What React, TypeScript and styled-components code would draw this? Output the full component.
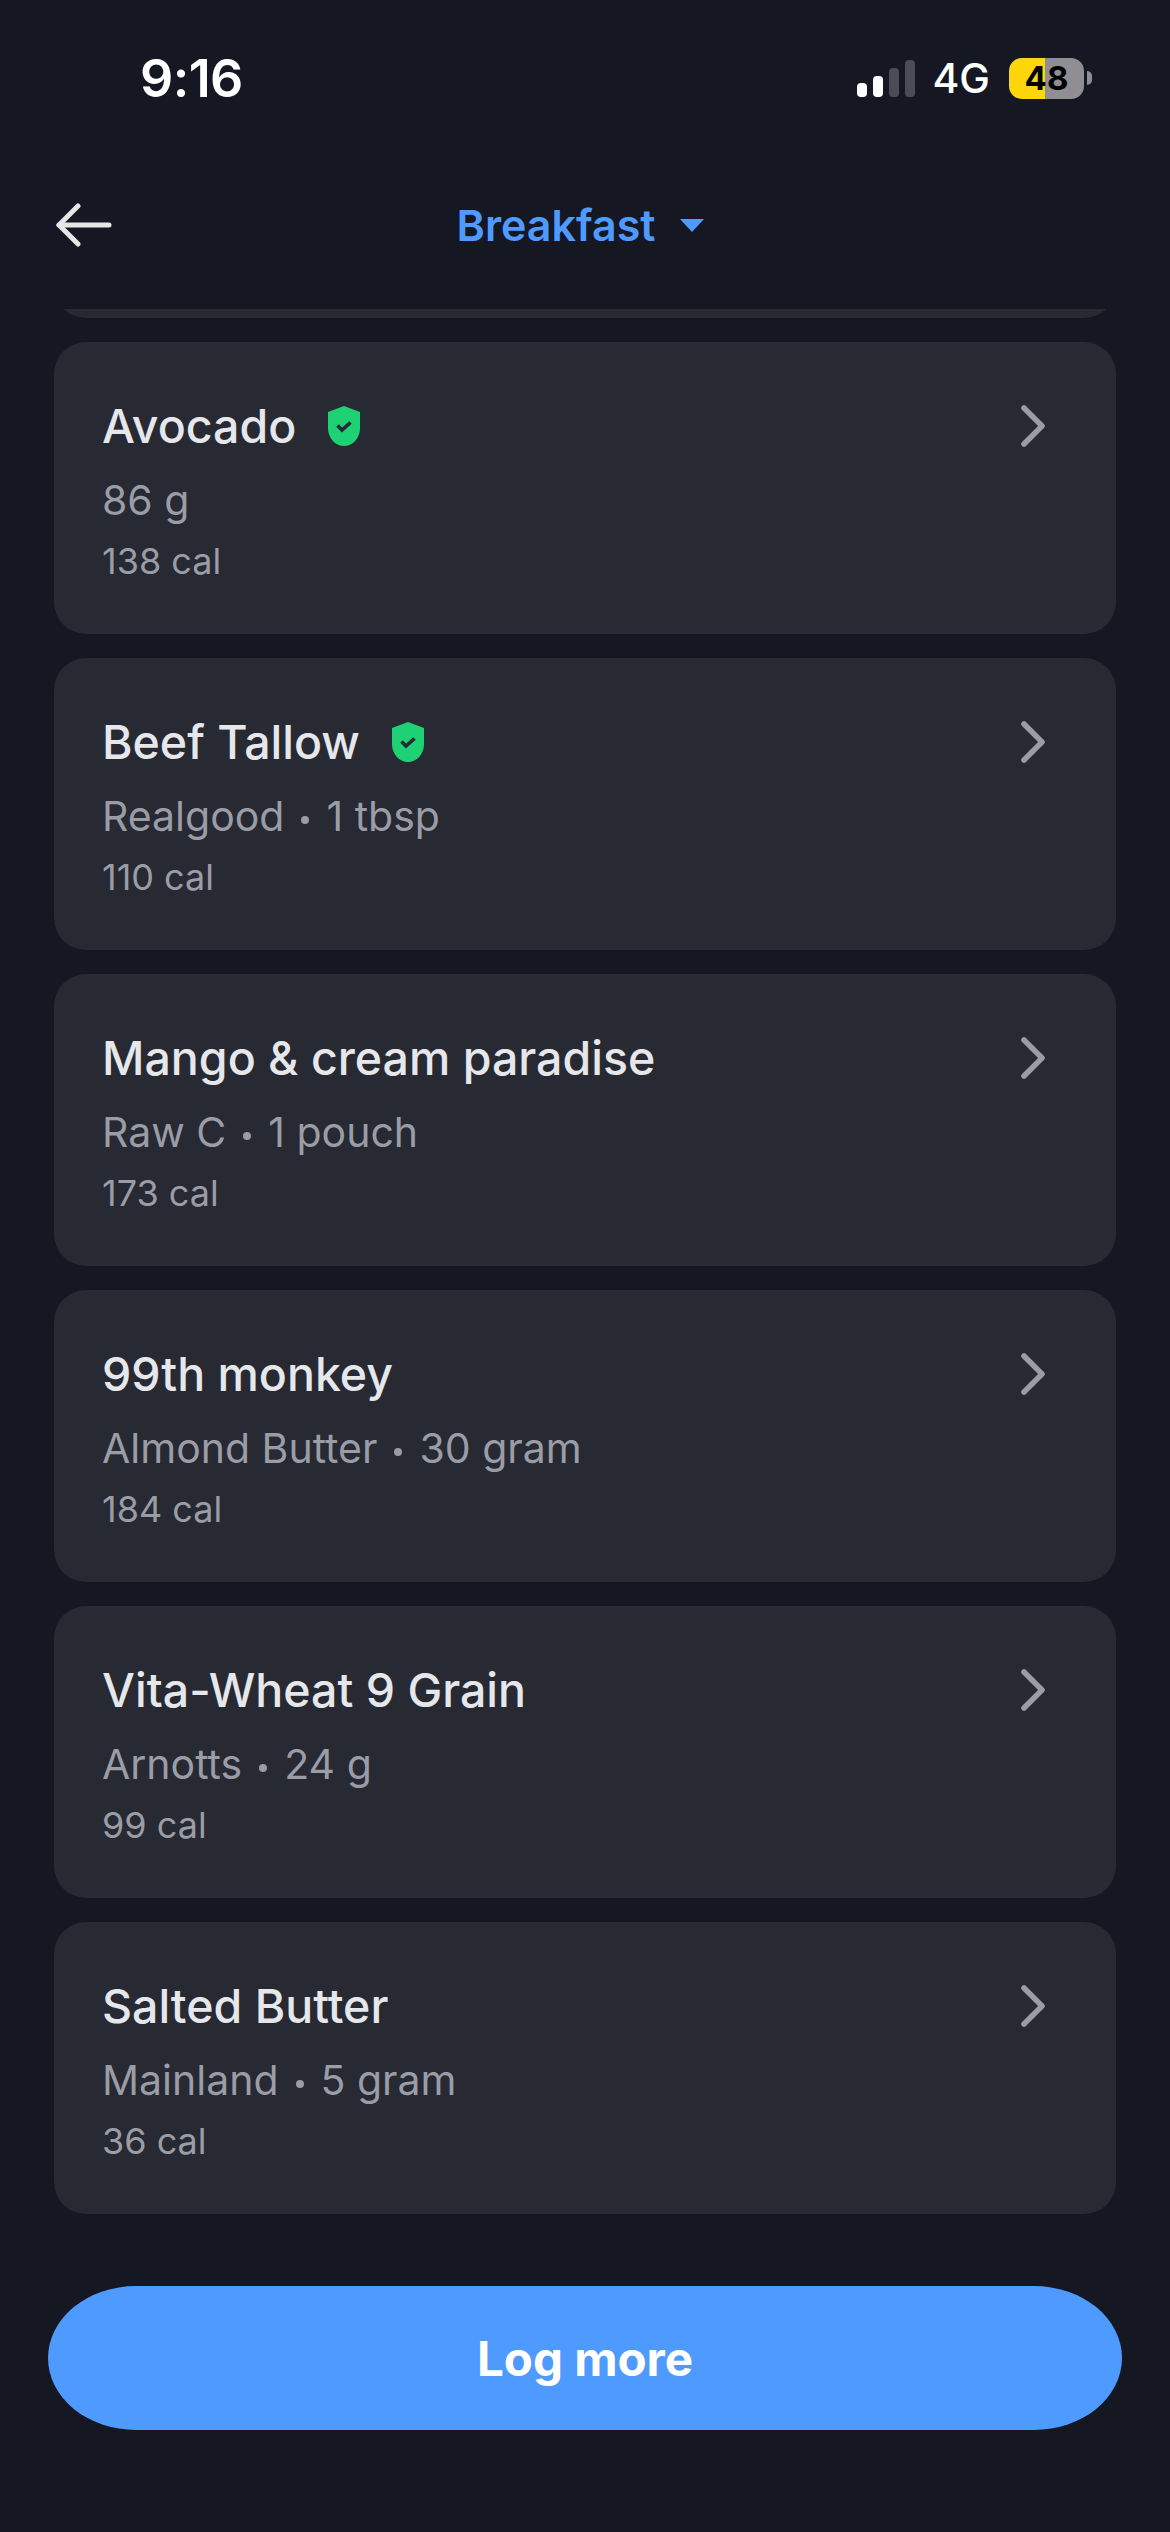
import styled, { createGlobalStyle } from "styled-components";

const GlobalStyle = createGlobalStyle`
    html, body {
        margin: 0;
        padding: 0;
        background: #151823;
    }
    * {
        box-sizing: border-box;
    }
`

const Screen = styled.div`
    width: 1170px;
    height: 2532px;
    display: flex;
    flex-direction: column;
    overflow: hidden;
    background: #151823;
    font-family: Inter, "Liberation Sans", sans-serif;
`

const StatusBar = styled.div`
    height: 156px;
    flex: none;
    display: flex;
    align-items: center;
    justify-content: space-between;
    padding: 0 78px 0 140px;
`

const Time = styled.div`
    font-size: 52px;
    font-weight: 600;
    letter-spacing: -0.6px;
    color: #ffffff;
`

const StatusIcons = styled.div`
    display: flex;
    align-items: center;
`

const Signal = styled.div`
    display: flex;
    align-items: flex-end;
    gap: 6px;
    height: 37px;
    margin-right: 17px;
`

const SignalBar = styled.div<{ $h: number; $on: boolean }>`
    width: 10px;
    height: ${({ $h }) => $h}px;
    border-radius: 4px;
    background: ${({ $on }) => ($on ? "#ffffff" : "#4a4c58")};
`

const Network = styled.div`
    font-size: 41px;
    font-weight: 500;
    color: #ffffff;
    margin-right: 19px;
`

const Battery = styled.div`
    width: 75px;
    height: 41px;
    border-radius: 13px;
    overflow: hidden;
    display: flex;
    align-items: center;
    justify-content: center;
    background: linear-gradient(90deg, #ffd60a 0, #ffd60a 36px, #8e8e93 36px);
    font-size: 33px;
    font-weight: 700;
    color: #000000;
`

const BatteryNub = styled.div`
    width: 5px;
    height: 14px;
    margin-left: 3px;
    border-radius: 0 5px 5px 0;
    background: #8e8e93;
`

const Nav = styled.div`
    height: 138px;
    flex: none;
    display: grid;
    grid-template-columns: 1fr auto 1fr;
    align-items: center;
    padding: 0 64px 0 56px;
`

const MealButton = styled.div`
    display: flex;
    align-items: center;
    gap: 24px;
    font-size: 43px;
    font-weight: 600;
    color: #4f9aff;
`

const List = styled.div`
    height: 1905px;
    flex: none;
    margin-top: 15px;
    padding: 0 54px;
    display: flex;
    flex-direction: column;
    justify-content: flex-end;
    gap: 24px;
    overflow: hidden;
`

const Card = styled.div`
    height: 292px;
    flex: none;
    padding: 53px 69px 0 48px;
    border-radius: 32px;
    background: #272933;
`

const TitleRow = styled.div`
    display: flex;
    align-items: center;
    justify-content: space-between;
    height: 62px;
`

const TitleGroup = styled.div`
    display: flex;
    align-items: center;
    gap: 32px;
`

const Title = styled.div`
    font-size: 46.5px;
    font-weight: 450;
    color: #e6e7ea;
`

const Detail = styled.div`
    margin-top: 12px;
    font-size: 41px;
    line-height: 62px;
    color: #9a9ca6;
`

const Dot = styled.span`
    display: inline-block;
    width: 8px;
    height: 8px;
    margin: 0 17px;
    border-radius: 50%;
    vertical-align: 7px;
    background: #9a9ca6;
`

const Calories = styled.div`
    margin-top: 6px;
    font-size: 36px;
    line-height: 48px;
    color: #9a9ca6;
`

const Footer = styled.div`
    flex: none;
    padding: 72px 48px 0 48px;
`

const LogButton = styled.div`
    height: 144px;
    display: flex;
    align-items: center;
    justify-content: center;
    border-radius: 88px / 72px;
    background: #4f9aff;
    font-size: 47.5px;
    font-weight: 700;
    color: #ffffff;
`

const foods = [
    { title: "Avocado", detail: ["86 g"], cal: "138 cal", verified: true },
    { title: "Beef Tallow", detail: ["Realgood", "1 tbsp"], cal: "110 cal", verified: true },
    { title: "Mango & cream paradise", detail: ["Raw C", "1 pouch"], cal: "173 cal" },
    { title: "99th monkey", detail: ["Almond Butter", "30 gram"], cal: "184 cal" },
    { title: "Vita-Wheat 9 Grain", detail: ["Arnotts", "24 g"], cal: "99 cal" },
    { title: "Salted Butter", detail: ["Mainland", "5 gram"], cal: "36 cal" },
];

function BackArrow() {
    return (
        <svg width="56" height="44" viewBox="0 0 56 44" fill="none" stroke="#e6e6e6" strokeWidth="5" strokeLinecap="round" strokeLinejoin="round">
            <path d="M22 3 L3 22 L22 41" />
            <path d="M3 22 H53" />
        </svg>
    );
}

function Shield() {
    return (
        <svg width="32" height="40" viewBox="0 0 32 40">
            <path d="M16 0 L32 6 V22 C32 32 25 40 16 40 C7 40 0 32 0 22 V6 Z" fill="#1dd174" />
            <path d="M9.5 19.5 L14 24 L22.5 16.5" fill="none" stroke="#272933" strokeWidth="3.6" />
        </svg>
    );
}

function Chevron() {
    return (
        <svg width="28" height="46" viewBox="0 0 28 46" fill="none" stroke="#9a9ca6" strokeWidth="5.5" strokeLinecap="round" strokeLinejoin="round">
            <path d="M5 5 L23 23 L5 41" />
        </svg>
    );
}

function App() {
    return (
        <Screen>
            <GlobalStyle />
            <StatusBar>
                <Time>9:16</Time>
                <StatusIcons>
                    <Signal>
                        <SignalBar $h={14} $on />
                        <SignalBar $h={21} $on />
                        <SignalBar $h={29} $on={false} />
                        <SignalBar $h={37} $on={false} />
                    </Signal>
                    <Network>4G</Network>
                    <Battery>48</Battery>
                    <BatteryNub />
                </StatusIcons>
            </StatusBar>
            <Nav>
                <BackArrow />
                <MealButton>
                    Breakfast
                    <svg width="26" height="14" viewBox="0 0 26 14">
                        <path d="M1 1 H25 L13 14 Z" fill="#4f9aff" />
                    </svg>
                </MealButton>
            </Nav>
            <List>
                <Card />
                {foods.map((food) => {
                    return (
                        <Card key={food.title}>
                            <TitleRow>
                                <TitleGroup>
                                    <Title>{food.title}</Title>
                                    {food.verified && <Shield />}
                                </TitleGroup>
                                <Chevron />
                            </TitleRow>
                            <Detail>
                                {food.detail[0]}
                                {food.detail[1] && <Dot />}
                                {food.detail[1]}
                            </Detail>
                            <Calories>{food.cal}</Calories>
                        </Card>
                    );
                })}
            </List>
            <Footer>
                <LogButton>Log more</LogButton>
            </Footer>
        </Screen>
    );
}

export default App;
